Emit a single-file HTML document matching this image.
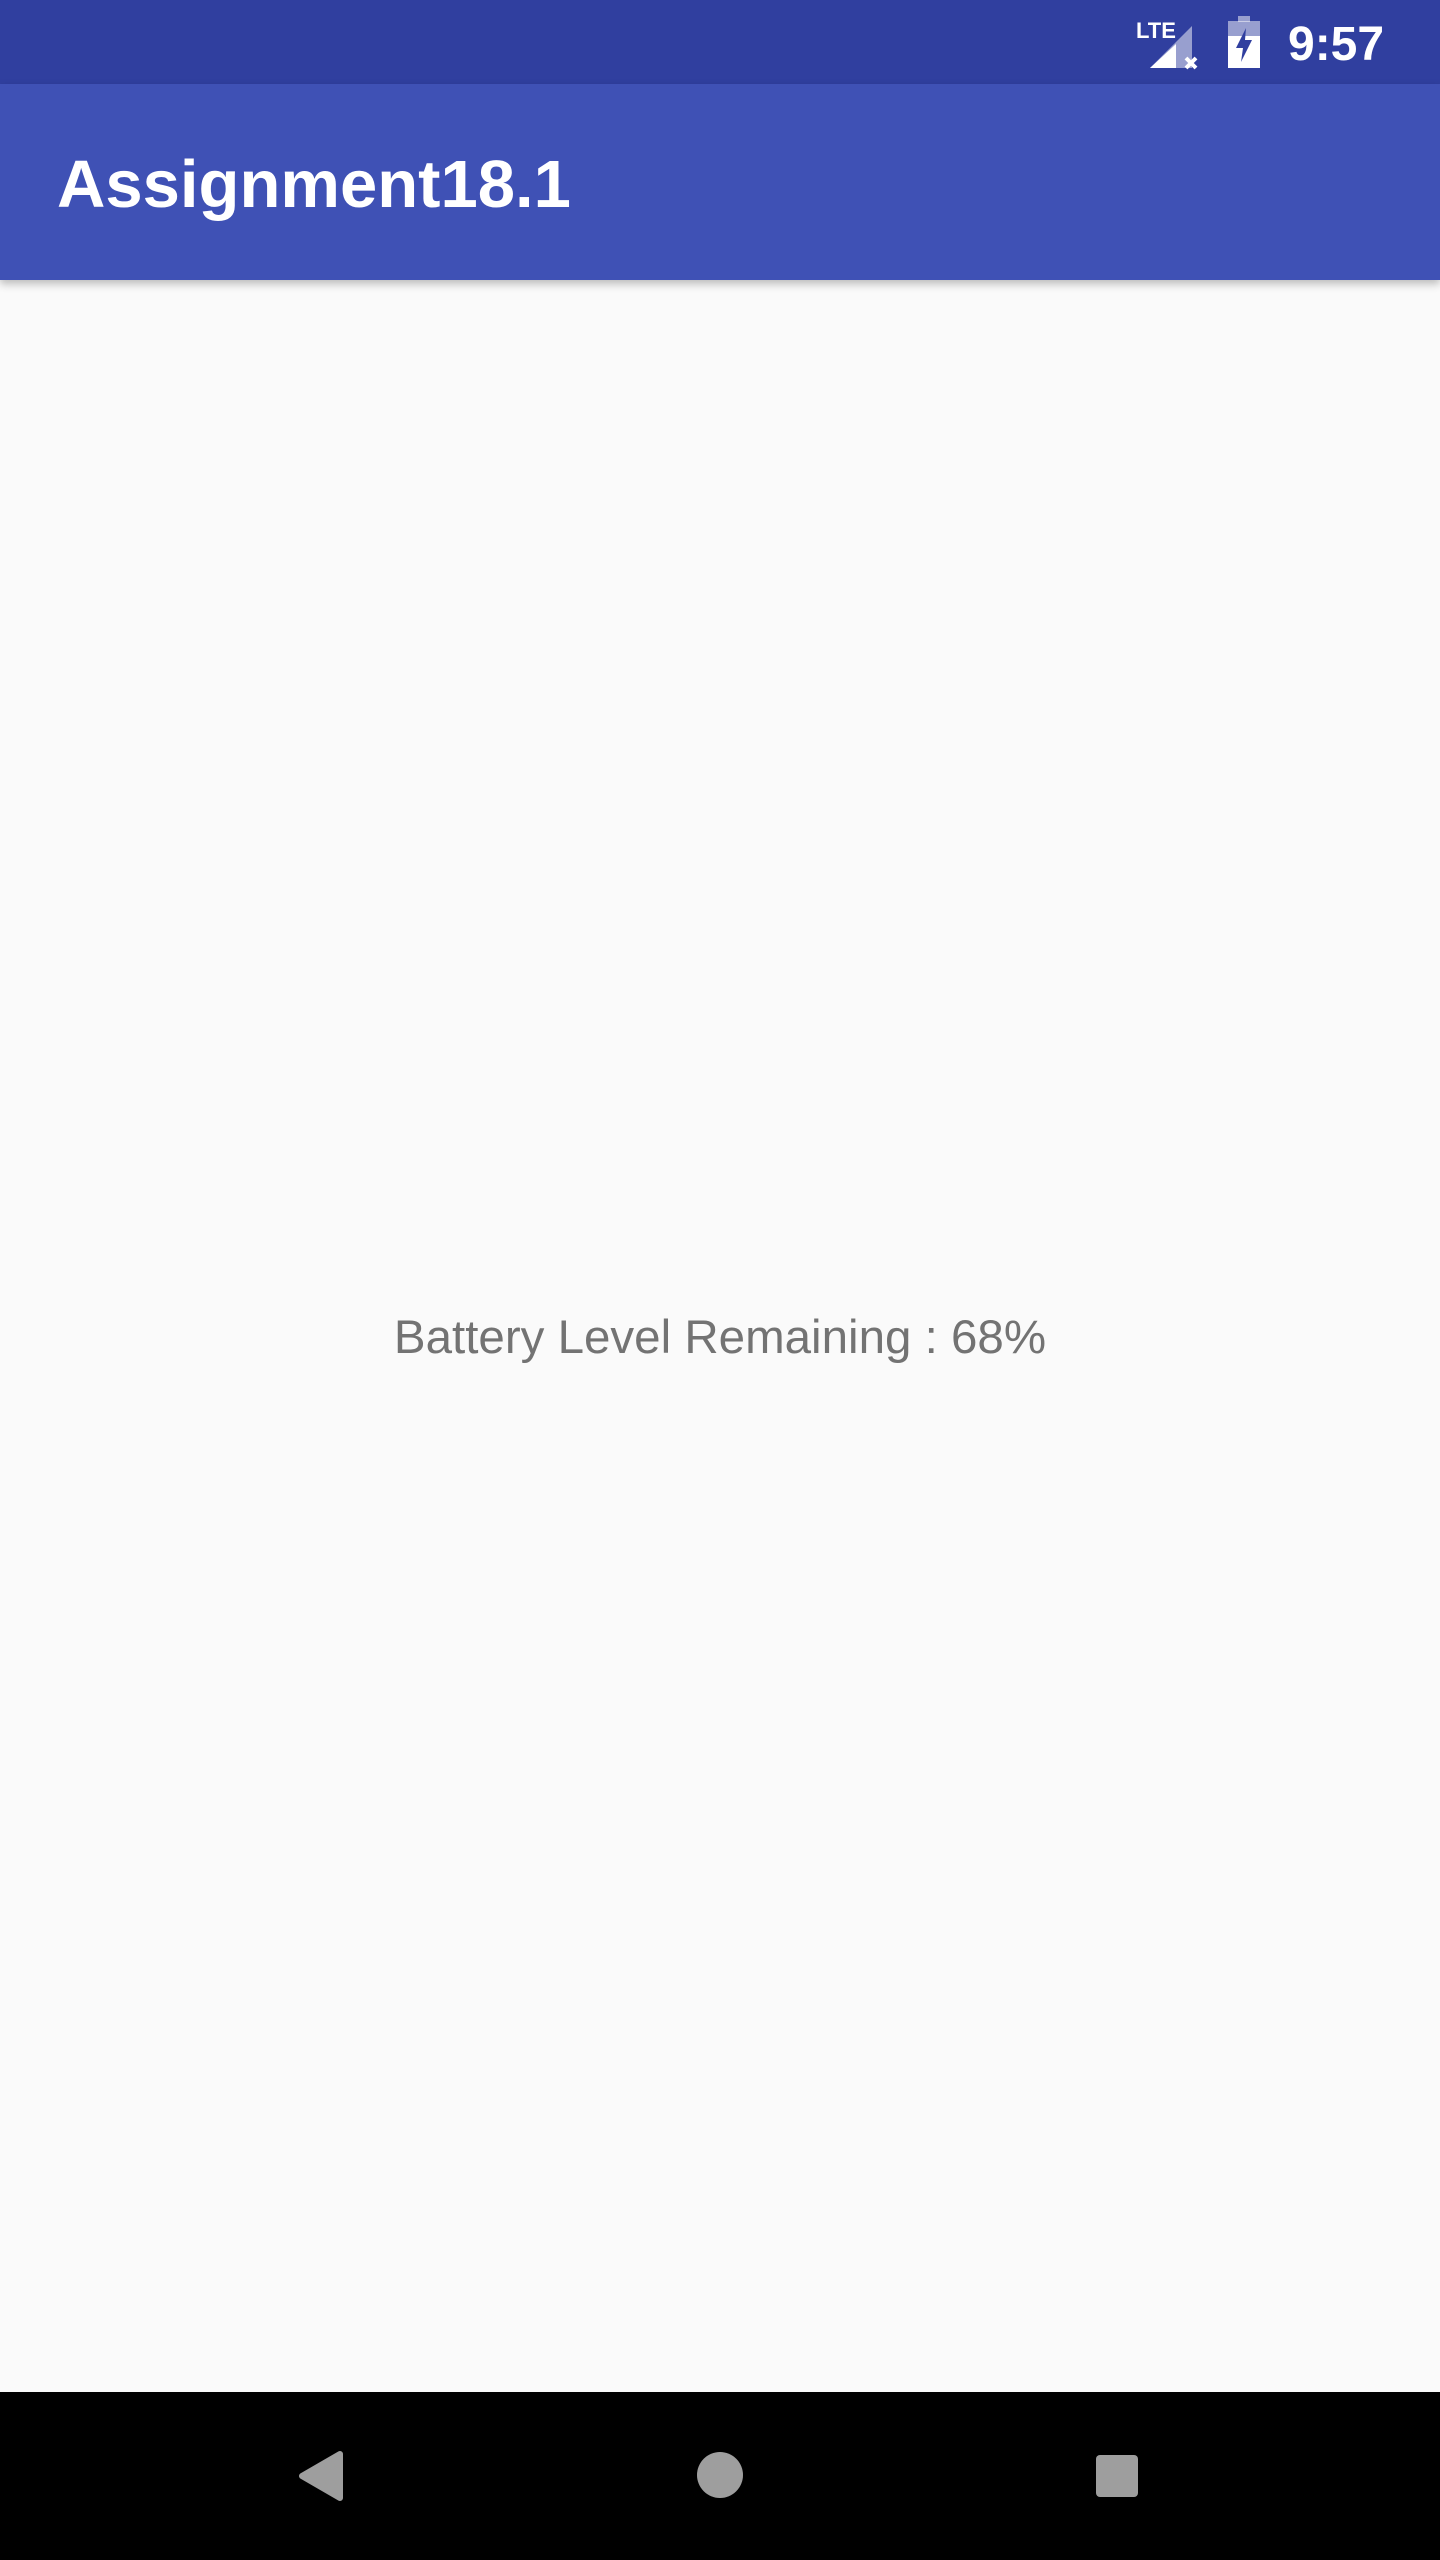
<!DOCTYPE html>
<html><head><meta charset="utf-8"><style>
html,body{margin:0;padding:0;}
body{width:1440px;height:2560px;position:relative;background:#FAFAFA;font-family:"Liberation Sans",sans-serif;overflow:hidden;}
.sb{position:absolute;left:0;top:0;width:1440px;height:84px;background:#303F9F;}
.ab{position:absolute;left:0;top:84px;width:1440px;height:196px;background:#3F51B5;box-shadow:0 4px 8px rgba(0,0,0,0.25);}
.title{position:absolute;left:57px;top:3px;line-height:196px;color:#fff;font-size:67px;font-weight:bold;}
.time{position:absolute;left:1288px;top:3px;line-height:84px;color:#fff;font-size:48px;font-weight:bold;}
.msg{position:absolute;left:0;width:1440px;top:1308px;text-align:center;font-size:47.5px;color:#737373;line-height:60px;}
.nav{position:absolute;left:0;top:2392px;width:1440px;height:168px;background:#000;}
</style></head><body>
<div class="sb">
<svg style="position:absolute;left:1130px;top:14px" width="74" height="56" viewBox="0 0 74 56">
<text x="6" y="24" font-family="Liberation Sans" font-size="22" font-weight="bold" fill="#fff">LTE</text>
<polygon points="20,54 62,54 62,12" fill="#fff" opacity="0.5"/>
<polygon points="20,54 46,54 46,30" fill="#fff"/>
<path d="M56,44 L66,54 M66,44 L56,54" stroke="#fff" stroke-width="4"/>
</svg>
<svg style="position:absolute;left:1228px;top:16px" width="32" height="52" viewBox="0 0 32 52">
<rect x="10" y="0" width="12" height="6" fill="#fff" opacity="0.5"/>
<rect x="0" y="5" width="32" height="15" fill="#fff" opacity="0.5"/>
<rect x="0" y="20" width="32" height="32" fill="#fff"/>
<polygon points="18,12 8,32 15,32 13,46 24,24 17,24" fill="#303F9F"/>
</svg>
<div class="time">9:57</div>
</div>
<div class="ab"><div class="title">Assignment18.1</div></div>
<div class="msg">Battery Level Remaining : 68%</div>
<div class="nav">
<svg style="position:absolute;left:298px;top:58px" width="48" height="52" viewBox="0 0 48 52"><polygon points="42,4 42,48 4,26" fill="#9e9e9e" stroke="#9e9e9e" stroke-width="6" stroke-linejoin="round"/></svg>
<div style="position:absolute;left:697px;top:60px;width:46px;height:46px;border-radius:50%;background:#9e9e9e"></div>
<div style="position:absolute;left:1096px;top:63px;width:42px;height:42px;border-radius:4px;background:#9e9e9e"></div>
</div>
</body></html>
